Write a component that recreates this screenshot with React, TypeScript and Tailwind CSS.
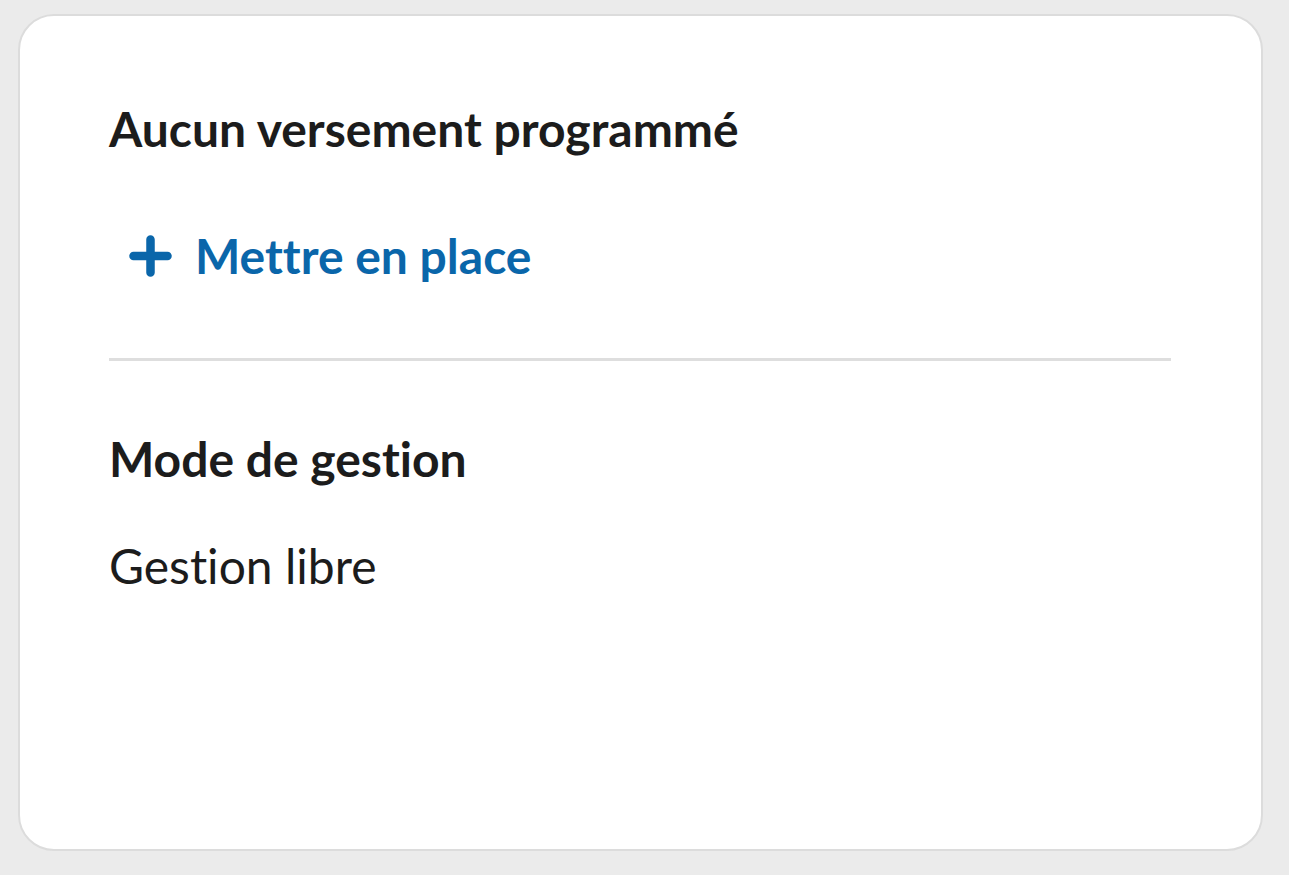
export default function App() {
  return (
    <div className="min-h-screen w-full bg-[#ebebeb] pt-[14px] pl-[18px] pr-[26px] pb-[24px] [font-variant-ligatures:none]" style={{ fontFamily: "Lato, 'Liberation Sans', sans-serif" }}>
      <div className="h-[837px] w-[1245px] rounded-[36px] border-2 border-[#dcdcdc] bg-white pl-[89px] pr-[90px] pt-[84px]">
        <h2 className="text-[48px] font-bold leading-[58px] text-[#1c1c1c]">Aucun versement programmé</h2>
        <button className="mt-[69px] flex items-center gap-[23px] pl-[20px] text-[48px] font-bold leading-[58px] text-[#0a66aa]">
          <svg width="43" height="42" viewBox="0 0 43 42" fill="none" stroke="currentColor" strokeWidth="8.5" strokeLinecap="round">
            <path d="M21.5 4.5v33M4.5 21h34" />
          </svg>
          Mettre en place
        </button>
        <div className="mt-[73px] h-[3px] w-full bg-[#dedede]" />
        <h3 className="mt-[69px] text-[48px] font-bold leading-[58px] text-[#1c1c1c]">Mode de gestion</h3>
        <p className="mt-[49px] text-[48px] leading-[58px] text-[#1c1c1c]">Gestion libre</p>
      </div>
    </div>
  );
}
